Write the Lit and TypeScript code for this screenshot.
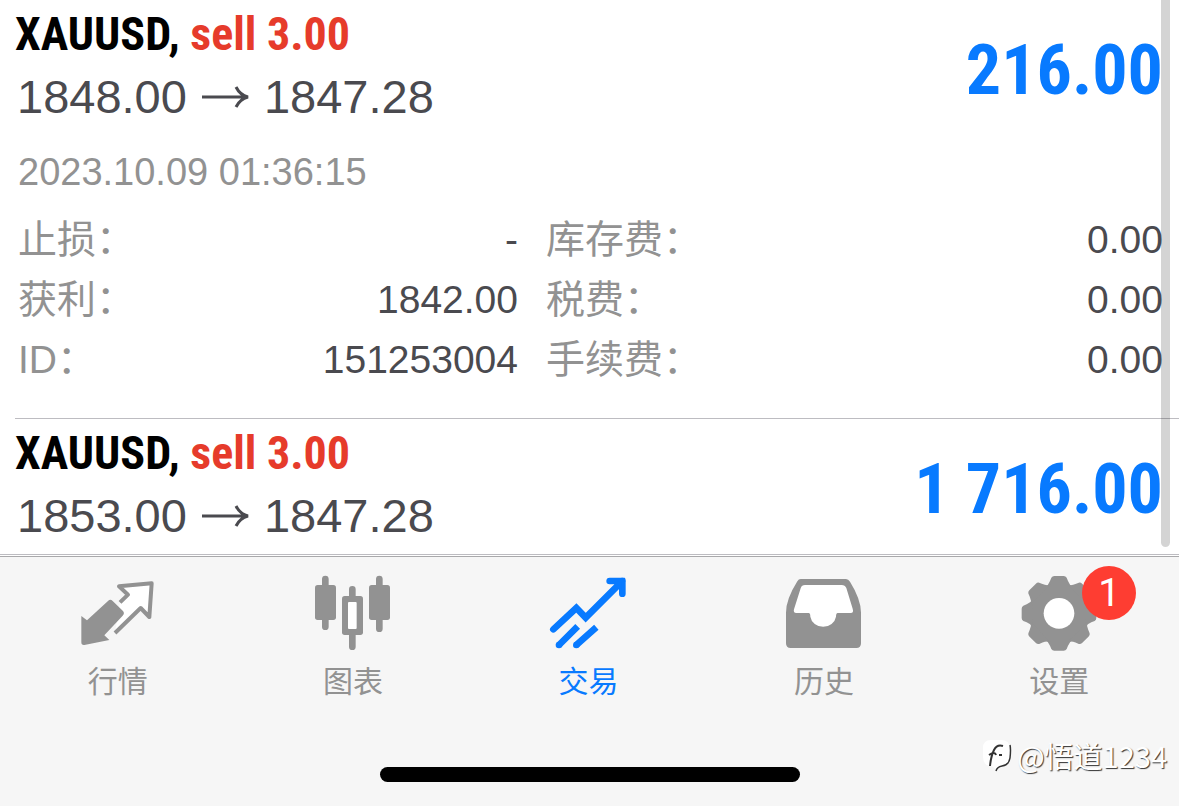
import { LitElement, html, css, svg, nothing } from "lit";
import { customElement, property } from "lit/decorators.js";

interface Detail {
  label: string;
  value: string;
}

interface Position {
  symbol: string;
  side: string;
  open: string;
  current: string;
  profit: string;
  time?: string;
  details?: Detail[];
}

const positions: Position[] = [
  {
    symbol: "XAUUSD,",
    side: "sell 3.00",
    open: "1848.00",
    current: "1847.28",
    profit: "216.00",
    time: "2023.10.09 01:36:15",
    details: [
      { label: "止损：", value: "-" },
      { label: "库存费：", value: "0.00" },
      { label: "获利：", value: "1842.00" },
      { label: "税费：", value: "0.00" },
      { label: "ID：", value: "151253004" },
      { label: "手续费：", value: "0.00" },
    ],
  },
  {
    symbol: "XAUUSD,",
    side: "sell 3.00",
    open: "1853.00",
    current: "1847.28",
    profit: "1 716.00",
  },
];

const quotesIcon = svg`<svg viewBox="53 36 240 240" aria-hidden="true">
  <path d="M164 219 L241 144 L267 171 L274 70 L176 79 L203 104 L179 127" fill="#fff" stroke="currentColor" stroke-width="12" stroke-linejoin="round"/>
  <path d="M63 168 L80 181 L143 123 Q150 116 157 123 L188 153 Q194 160 187 167 L132 226 L147 240 L72 255 Q63 256 63 247 Z" fill="currentColor"/>
</svg>`;

const chartIcon = svg`<svg viewBox="759 36 240 240" aria-hidden="true">
  <path d="M796 57 V200 M958 57 V206 M877 88 V260" stroke="currentColor" stroke-width="20" stroke-linecap="round"/>
  <rect x="765" y="75" width="63" height="105" rx="8" fill="currentColor"/>
  <rect x="927" y="75" width="63" height="105" rx="8" fill="currentColor"/>
  <rect x="846" y="108" width="63" height="117" rx="8" fill="currentColor"/>
  <rect x="864" y="126" width="26" height="81" rx="3" fill="#fff"/>
</svg>`;

const tradeIcon = svg`<svg viewBox="56 36 240 240" aria-hidden="true">
  <g fill="none" stroke="currentColor" stroke-width="20">
    <path d="M72 208 L141 144 L169 173 L272 70" stroke-linecap="round"/>
    <path d="M241 63 H279 V101" stroke-linecap="round" stroke-linejoin="round"/>
    <path d="M145 199 L89 255 M201 202 L141 255"/>
  </g>
  <path d="M248 66 H276 V94 Z M276 53 H285 Q288 53 288 57 V66 Z" fill="currentColor"/>
  <circle cx="89" cy="255" r="10" fill="currentColor"/>
  <circle cx="141" cy="255" r="10" fill="currentColor"/>
</svg>`;

const historyIcon = svg`<svg viewBox="762 36 240 240" aria-hidden="true">
  <path d="M812 57 H948 Q955 57 960 65 Q993 118 993 158 V250 Q993 264 979 264 H782 Q768 264 768 250 V158 Q768 118 802 64 Q806 57 812 57 Z" fill="currentColor"/>
  <path d="M825 75 H935 Q945 75 949 84 L968 146 Q972 159 962 159 H923 Q918 159 918 170 A39 36 0 0 1 841 170 Q841 159 836 159 H799 Q789 159 792 148 L812 85 Q815 75 825 75 Z" fill="#fff"/>
</svg>`;

const teeth = [0, 45, 90, 135, 180, 225, 270, 315];

const settingsIcon = svg`<svg viewBox="58 51 240 240" aria-hidden="true">
  <g fill="currentColor">
    <circle cx="178" cy="175" r="89"/>
    ${teeth.map(
      (angle) => svg`<path transform=${`translate(178 175) rotate(${angle})`}
        d="M-42 -79 Q-31 -85 -27 -97 L-23 -107 Q-20 -112 -14 -112 H14 Q20 -112 23 -107 L27 -97 Q31 -85 42 -79 Z"/>`
    )}
  </g>
  <circle cx="178" cy="175" r="46" fill="#fff"/>
</svg>`;

const tabs = [
  { label: "行情", icon: quotesIcon },
  { label: "图表", icon: chartIcon },
  { label: "交易", icon: tradeIcon, active: true },
  { label: "历史", icon: historyIcon },
  { label: "设置", icon: settingsIcon, badge: "1" },
];

@customElement("position-card")
class PositionCard extends LitElement {
  @property({ attribute: false }) position!: Position;

  static styles = css`
    :host {
      display: block;
      margin-left: 15px;
      padding: 4px 16px 0 0;
      border-bottom: 1px solid #bdbcc1;
      color: #4a4a4f;
    }
    .summary {
      display: flex;
      justify-content: space-between;
      align-items: center;
    }
    .title {
      margin: 0;
      font: bold 46px/60px "Roboto Condensed", "Liberation Sans", sans-serif;
      color: #000;
    }
    .side {
      color: #e63b2b;
    }
    .prices {
      display: flex;
      align-items: center;
      gap: 15px;
      padding-left: 2px;
      font-size: 47px;
      line-height: 66px;
    }
    .arrow {
      width: 47px;
      height: 24px;
    }
    .profit {
      padding-top: 6px;
      font: bold 70px/80px "Roboto Condensed", "Liberation Sans", sans-serif;
      color: #087aff;
    }
    .time {
      margin-top: 12px;
      padding-left: 3px;
      font-size: 38px;
      line-height: 60px;
      color: #929292;
    }
    .details {
      display: grid;
      grid-template-columns: 503fr 620fr;
      column-gap: 25px;
      margin: 8px 0 28px;
      font-size: 39px;
      line-height: 60px;
    }
    .detail {
      display: flex;
      justify-content: space-between;
    }
    .label {
      padding-left: 3px;
      color: #929292;
    }
    .value {
      margin: 0;
    }
  `;

  render() {
    const p = this.position;
    return html`
      <div class="summary">
        <div>
          <h2 class="title">${p.symbol} <span class="side">${p.side}</span></h2>
          <div class="prices">
            <span>${p.open}</span>
            <svg class="arrow" viewBox="0 0 47 24" fill="none" stroke="currentColor" stroke-width="3" role="img" aria-label="→">
              <path d="M0 12 H45 M34 2 Q38 10 46 12 Q38 14 34 22" />
            </svg>
            <span>${p.current}</span>
          </div>
        </div>
        <div class="profit">${p.profit}</div>
      </div>
      ${p.time ? html`<div class="time">${p.time}</div>` : nothing}
      ${p.details
        ? html`<dl class="details">
            ${p.details.map(
              (d) => html`<div class="detail">
                <dt class="label">${d.label}</dt>
                <dd class="value">${d.value}</dd>
              </div>`
            )}
          </dl>`
        : nothing}
    `;
  }
}

@customElement("app-root")
class AppRoot extends LitElement {
  static styles = css`
    :host {
      display: flex;
      flex-direction: column;
      min-height: 100vh;
      background: #fff;
      font-family: "Liberation Sans", "Noto Sans CJK SC", sans-serif;
    }
    .list {
      position: relative;
    }
    .last {
      margin-left: 0;
      padding-left: 15px;
      padding-bottom: 5px;
    }
    .thumb {
      position: absolute;
      top: 0;
      right: 9px;
      bottom: 8px;
      width: 9px;
      border-radius: 0 0 5px 5px;
      background: rgba(0, 0, 0, 0.17);
    }
    .bar {
      flex: 1;
      display: flex;
      flex-direction: column;
      justify-content: space-between;
      margin-top: 1px;
      border-top: 1px solid #a9a9ab;
      background: #f6f6f6;
    }
    .tabs {
      display: grid;
      grid-template-columns: repeat(5, 1fr);
      padding: 15px 2px 0 0;
    }
    .tab {
      display: flex;
      flex-direction: column;
      align-items: center;
      gap: 5px;
      padding: 0;
      border: 0;
      background: none;
      font: 30px/44px "Noto Sans CJK SC", sans-serif;
      color: #929292;
    }
    .active {
      color: #087aff;
    }
    .icon {
      position: relative;
      width: 80px;
      height: 80px;
    }
    .icon svg {
      display: block;
      width: 100%;
      height: 100%;
    }
    .badge {
      position: absolute;
      top: -6px;
      left: 63px;
      width: 54px;
      height: 54px;
      border-radius: 50%;
      background: #fe3d32;
      color: #fff;
      font: 39px/54px Roboto, sans-serif;
    }
    .footer {
      display: grid;
      grid-template-columns: 1fr 420px 1fr;
      align-items: end;
      padding-bottom: 24px;
    }
    .home {
      grid-column: 2;
      height: 15px;
      border-radius: 8px;
      background: #000;
    }
    .mark {
      display: flex;
      align-items: center;
      justify-content: flex-end;
      gap: 5px;
      padding: 0 12px 3px 0;
      color: #fff;
      font: 29px/48px "Noto Sans CJK SC", sans-serif;
      text-shadow: 1px 1px 1px #333;
    }
    .logo {
      width: 30px;
      height: 34px;
    }
  `;

  render() {
    return html`
      <main class="list">
        ${positions.map(
          (p, i) => html`<position-card
            class=${i === positions.length - 1 ? "last" : ""}
            .position=${p}
          ></position-card>`
        )}
        <div class="thumb"></div>
      </main>
      <div class="bar">
        <nav class="tabs">
          ${tabs.map(
            (t) => html`<button class="tab ${t.active ? "active" : ""}">
              <span class="icon">${t.icon}${t.badge ? html`<span class="badge">${t.badge}</span>` : nothing}</span>
              <span>${t.label}</span>
            </button>`
          )}
        </nav>
        <div class="footer">
          <div class="home"></div>
          <div class="mark">
            <svg class="logo" viewBox="0 0 30 34" aria-hidden="true">
              <path d="M9 2 H19 Q28 2 28 11 V19 Q28 27 20 28 Q15 29 14 33 Q12 28 8 28 Q1 27 1 19 V10 Q1 2 9 2Z" fill="#fff"/>
              <path d="M28 7 Q29 11 28 20 Q27 27 20 28 Q15 29 14 33" fill="none" stroke="#333" stroke-width="1.5"/>
              <path d="M8 28 Q9 18 12 12 Q15 6 21 8 M7 17 Q13 13 14 17 M17 17 H20" fill="none" stroke="#333" stroke-width="2"/>
            </svg>
            <span>@悟道1234</span>
          </div>
        </div>
      </div>
    `;
  }
}
